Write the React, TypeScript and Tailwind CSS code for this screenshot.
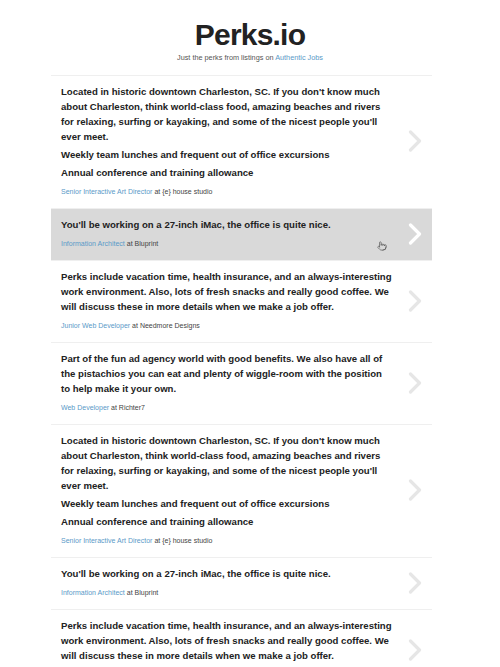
import { Pointer } from "lucide-react";

type Perk = {
  // each paragraph is given as its wrapped lines, as the listing shows them
  paras: string[][];
  title: string;
  company: string;
};

const charleston: Perk = {
  paras: [
    [
      "Located in historic downtown Charleston, SC. If you don't know much",
      "about Charleston, think world-class food, amazing beaches and rivers",
      "for relaxing, surfing or kayaking, and some of the nicest people you'll",
      "ever meet.",
    ],
    ["Weekly team lunches and frequent out of office excursions"],
    ["Annual conference and training allowance"],
  ],
  title: "Senior Interactive Art Director",
  company: "{e} house studio",
};

const imac: Perk = {
  paras: [["You'll be working on a 27-inch iMac, the office is quite nice."]],
  title: "Information Architect",
  company: "Bluprint",
};

const needmore: Perk = {
  paras: [
    [
      "Perks include vacation time, health insurance, and an always-interesting",
      "work environment. Also, lots of fresh snacks and really good coffee. We",
      "will discuss these in more details when we make a job offer.",
    ],
  ],
  title: "Junior Web Developer",
  company: "Needmore Designs",
};

const richter: Perk = {
  paras: [
    [
      "Part of the fun ad agency world with good benefits. We also have all of",
      "the pistachios you can eat and plenty of wiggle-room with the position",
      "to help make it your own.",
    ],
  ],
  title: "Web Developer",
  company: "Richter7",
};

const perks = [charleston, imac, needmore, richter, charleston, imac, needmore];

function Chevron({ hover }: { hover: boolean }) {
  return (
    <svg
      width="14"
      height="22"
      viewBox="0 0 14 22"
      fill="none"
      className={hover ? "text-white" : "text-[#e6e6e6]"}
    >
      <polyline
        points="2.5,2 11.5,11 2.5,20"
        stroke="currentColor"
        strokeWidth="3.2"
        strokeLinecap="round"
        strokeLinejoin="round"
      />
    </svg>
  );
}

function PerkRow({ perk, hover }: { perk: Perk; hover: boolean }) {
  return (
    <li
      className={`relative flex items-center justify-between border-b border-[#efefef] pl-[10px] pr-[10px] pt-[8px] pb-[10px] ${
        hover ? "bg-[#d9d9d9]" : ""
      }`}
    >
      <div className="w-[334px]">
        {perk.paras.map((lines, i) => (
          <p
            key={i}
            className={`whitespace-nowrap text-[9.6px] font-bold leading-[15px] text-[#222] ${i > 0 ? "mt-[3px]" : ""}`}
          >
            {lines.map((line, j) => (
              <span key={j} className="block">
                {line}
              </span>
            ))}
          </p>
        ))}
        <p className="mt-[6px] text-[7px] leading-[12px] text-[#444]">
          <a className="text-[#5a9ac8]">{perk.title}</a> at {perk.company}
        </p>
      </div>
      <Chevron hover={hover} />
      {hover && (
        <Pointer
          size={10}
          strokeWidth={1.6}
          className="absolute left-[326px] top-[32px] text-[#555]"
        />
      )}
    </li>
  );
}

export default function App() {
  return (
    <div className="min-h-screen bg-white font-['Liberation_Sans',Arial,sans-serif]">
      <header className="pt-[20px] text-center">
        <h1 className="text-[30px] font-bold leading-[30px] tracking-[-0.8px] text-[#222]">
          Perks.io
        </h1>
        <p className="mt-[3px] text-[7.3px] leading-[10px] text-[#555]">
          Just the perks from listings on <a className="text-[#5a9ac8]">Authentic Jobs</a>
        </p>
      </header>
      <div className="pl-[51px] pt-[12px]">
        <ul className="w-[381px] border-t border-[#efefef]">
          {perks.map((perk, i) => (
            <PerkRow key={i} perk={perk} hover={i === 1} />
          ))}
        </ul>
      </div>
    </div>
  );
}
